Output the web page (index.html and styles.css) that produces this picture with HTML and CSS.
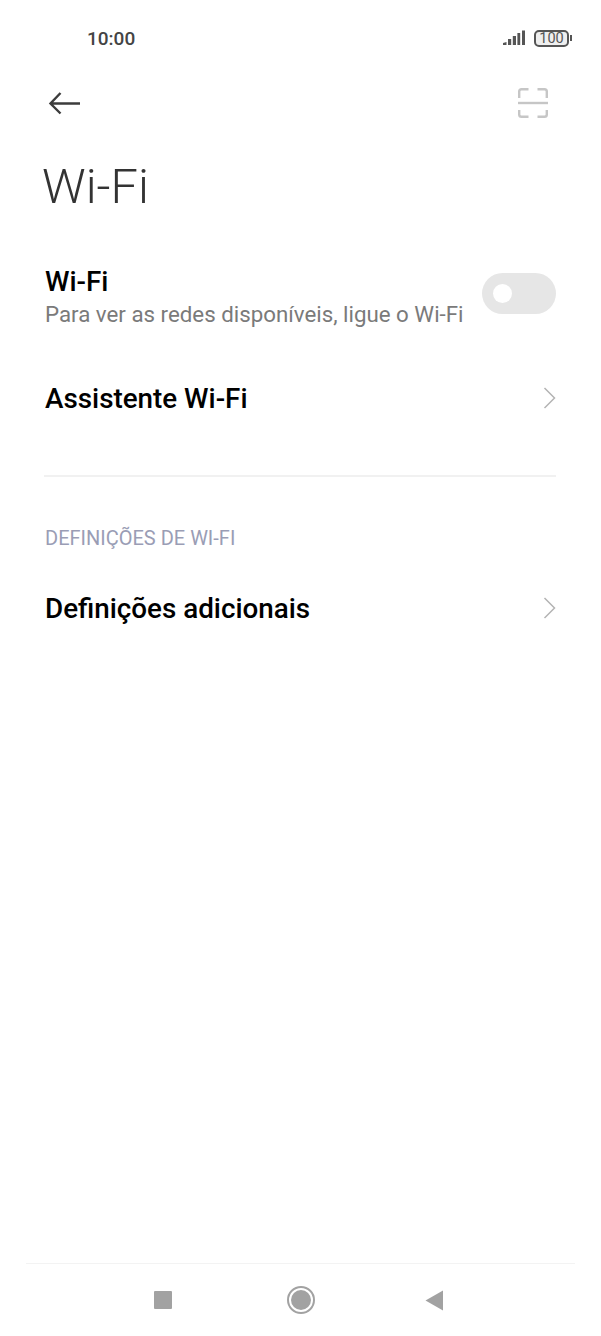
FILE: index.html
```html
<!DOCTYPE html>
<html lang="pt">
<head>
  <meta charset="UTF-8">
  <meta name="viewport" content="width=device-width, initial-scale=1.0">
  <title>Wi-Fi</title>
  <link rel="stylesheet" href="styles.css">
</head>
<body>

<div class="screen">

  <!-- status bar -->
  <div class="status-bar">
    <span class="clock">10:00</span>
    <div class="status-icons">
      <svg class="signal" width="22" height="16" viewBox="0 0 22 16">
        <path d="M0 15V13L3.5 12V15Z" fill="#555"/>
        <rect x="5" y="9" width="3.2" height="6" fill="#555"/>
        <rect x="9.8" y="6" width="3.2" height="9" fill="#555"/>
        <rect x="14.4" y="3" width="2.8" height="12" fill="#555"/>
        <rect x="19" y="0.5" width="3" height="14.5" fill="#555"/>
      </svg>
      <div class="battery"><span>100</span></div>
      <div class="battery-tip"></div>
    </div>
  </div>

  <!-- toolbar -->
  <div class="toolbar">
    <svg width="34" height="24" viewBox="0 0 34 24">
      <path d="M32 12.5H2.5M12.5 2L2.5 12.5L12.5 22.5" fill="none" stroke="#3c3c3c" stroke-width="2.4"/>
    </svg>
    <svg width="30" height="30" viewBox="0 0 30 30">
      <path d="M1.2 10V3.5Q1.2 1.2 3.5 1.2H10.5M19.5 1.2H26.5Q28.8 1.2 28.8 3.5V10M1.2 22V26.5Q1.2 28.8 3.5 28.8H10.5M19.5 28.8H26.5Q28.8 28.8 28.8 26.5V22" fill="none" stroke="#c6c6c6" stroke-width="2.4"/>
      <path d="M0 15H30" fill="none" stroke="#c6c6c6" stroke-width="2.4"/>
    </svg>
  </div>

  <h1 class="page-title">Wi-Fi</h1>

  <!-- wifi toggle -->
  <div class="row row-toggle">
    <div class="row-text">
      <div class="row-label">Wi-Fi</div>
      <div class="row-sub">Para ver as redes disponíveis, ligue o Wi-Fi</div>
    </div>
    <div class="switch"><div class="switch-knob"></div></div>
  </div>

  <div class="row row-link">
    <div class="row-label">Assistente Wi-Fi</div>
    <svg class="chevron" width="13" height="22" viewBox="0 0 13 22">
      <path d="M1.5 1L11.5 11L1.5 21" fill="none" stroke="#b4b4b4" stroke-width="1.5"/>
    </svg>
  </div>

  <div class="divider"></div>

  <div class="section-title">DEFINIÇÕES DE WI-FI</div>

  <div class="row row-link">
    <div class="row-label">Definições adicionais</div>
    <svg class="chevron" width="13" height="22" viewBox="0 0 13 22">
      <path d="M1.5 1L11.5 11L1.5 21" fill="none" stroke="#b4b4b4" stroke-width="1.5"/>
    </svg>
  </div>

  <!-- nav bar -->
  <div class="nav-bar">
    <div class="nav-square"></div>
    <svg class="nav-home" width="28" height="28" viewBox="0 0 28 28">
      <circle cx="14" cy="14" r="13" fill="none" stroke="#a2a2a2" stroke-width="2"/>
      <circle cx="14" cy="14" r="10" fill="#a2a2a2"/>
    </svg>
    <svg width="19" height="21" viewBox="0 0 19 21">
      <path d="M0.5 10.5L18 0.5V20.5Z" fill="#a2a2a2"/>
    </svg>
  </div>

</div>

</body>
</html>
```

FILE: styles.css
```css
* {
  box-sizing: border-box;
}

body {
  margin: 0;
  background: #fff;
  font-family: Roboto, 'Noto Sans', Arial, sans-serif;
}

.screen {
  width: 601px;
  height: 1336px;
  display: flex;
  flex-direction: column;
  padding: 0 45px 0 44px;
}

.status-bar {
  height: 28px;
  margin-top: 24px;
  margin-right: -16px;
  padding-left: 43px;
  display: flex;
  justify-content: space-between;
  align-items: center;
}

.clock {
  font-size: 19px;
  font-weight: 500;
  color: #444;
}

.status-icons {
  display: flex;
  align-items: center;
}

.signal {
  margin-right: 9px;
}

.battery {
  width: 35px;
  height: 17px;
  border: 2px solid #555;
  border-radius: 5px;
  background: #efefef;
  display: flex;
  align-items: center;
  justify-content: center;
  font-size: 14.5px;
  line-height: 13px;
  color: #555;
}

.battery-tip {
  width: 2px;
  height: 6px;
  margin-left: 1px;
  background: #555;
}

.toolbar {
  height: 32px;
  margin-top: 35px;
  margin-left: 4px;
  margin-right: 8px;
  display: flex;
  justify-content: space-between;
  align-items: center;
}

.page-title {
  margin: 38px 0 0 -2px;
  font-size: 48.7px;
  line-height: 60px;
  font-weight: 300;
  color: #333;
}

.row {
  display: flex;
  justify-content: space-between;
  align-items: center;
}

.row-toggle {
  margin-top: 48px;
  align-items: flex-start;
}

.row-link {
  height: 40px;
}

.row-toggle + .row-link {
  margin-top: 50px;
}

.row-text {
  padding-left: 1px;
}

.row-label {
  font-size: 27.8px;
  line-height: 33px;
  font-weight: 500;
  color: #000;
}

.row-link .row-label {
  padding-left: 1px;
}

.row-sub {
  margin-top: 2px;
  font-size: 22.3px;
  line-height: 28px;
  color: #7a7a7a;
}

.switch {
  width: 74px;
  height: 41px;
  margin-top: 8px;
  border-radius: 21px;
  background: #e6e6e6;
  display: flex;
  align-items: center;
  padding-left: 11px;
}

.switch-knob {
  width: 19px;
  height: 19px;
  border-radius: 50%;
  background: #fff;
}

.divider {
  height: 2px;
  margin-top: 57px;
  background: #f1f1f1;
}

.section-title {
  margin-top: 49px;
  padding-left: 1px;
  font-size: 20px;
  line-height: 24px;
  color: #9a9db5;
}

.section-title + .row-link {
  margin-top: 38px;
}

.nav-bar {
  margin: auto -19px 0 -18px;
  height: 73px;
  border-top: 1px solid #f3f3f3;
  display: flex;
  justify-content: space-between;
  align-items: center;
  padding: 0 131px 0 128px;
}

.nav-square {
  width: 18px;
  height: 18px;
  border-radius: 1px;
  background: #a2a2a2;
}

.nav-home {
  margin-left: 4px;
}
```
